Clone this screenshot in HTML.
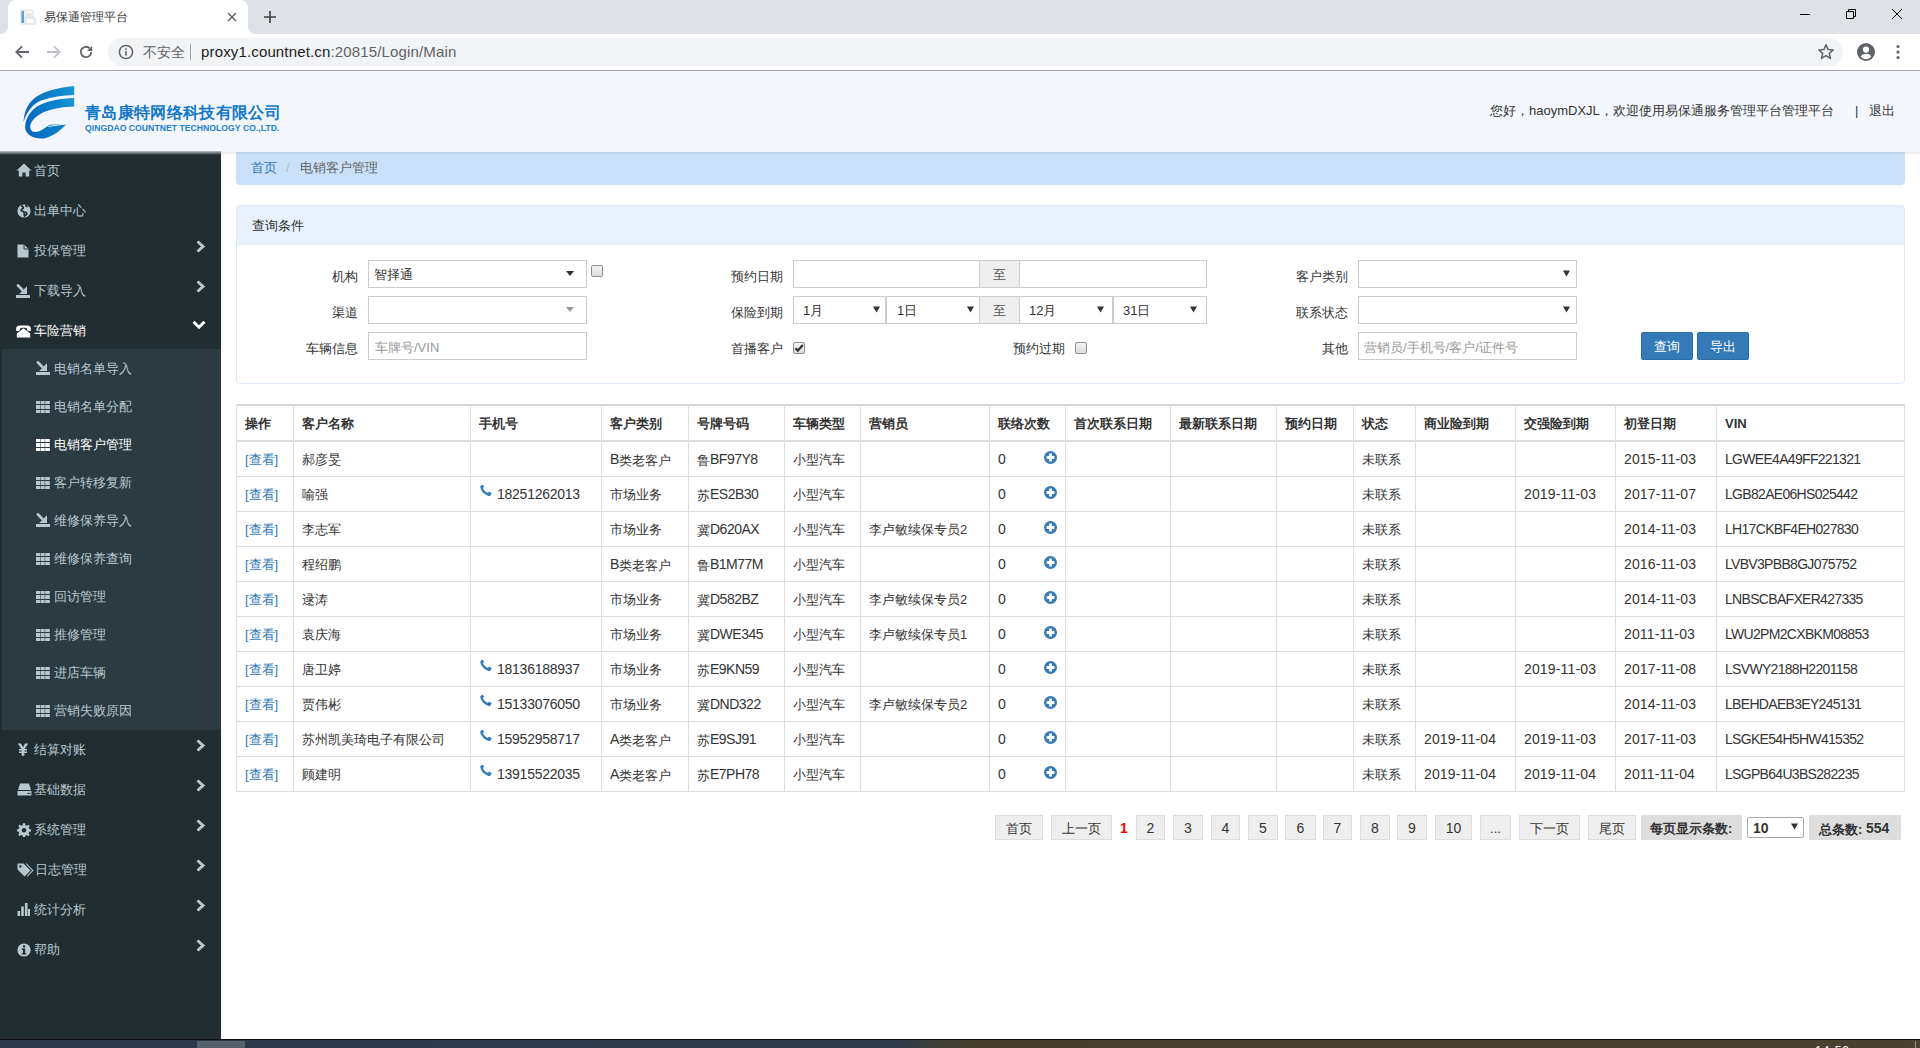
<!DOCTYPE html>
<html><head><meta charset="utf-8">
<style>
*{box-sizing:border-box;margin:0;padding:0}
html,body{width:1920px;height:1048px;overflow:hidden;background:#fff;font-family:"Liberation Sans",sans-serif;font-size:13px;color:#333}
.abs{position:absolute}
.t{position:absolute;line-height:16px;white-space:nowrap}
/* browser chrome */
#tabs{left:0;top:0;width:1920px;height:34px;background:#dee1e6}
#tab{left:8px;top:0;width:240px;height:34px;background:#fff;border-radius:8px 8px 0 0}
#tab:before{content:"";position:absolute;left:-8px;bottom:0;width:8px;height:8px;background:radial-gradient(circle at 0 0,#dee1e6 8px,#fff 8.5px)}
#tab:after{content:"";position:absolute;right:-8px;bottom:0;width:8px;height:8px;background:radial-gradient(circle at 100% 0,#dee1e6 8px,#fff 8.5px)}
#addr{left:0;top:34px;width:1920px;height:37px;background:#fff;border-bottom:1px solid #a4a7ab}
#omni{left:108px;top:38px;width:1735px;height:28px;background:#f1f3f4;border-radius:14px}
/* header */
#hdr{left:0;top:71px;width:1920px;height:81px;background:#f3f7fd}
#side{left:0;top:151px;width:221px;height:888px;background:linear-gradient(#b9bfc6 0px,#222d32 4px)}
#shadow{left:221px;top:152px;width:1699px;height:3px;background:linear-gradient(rgba(0,0,0,.09),rgba(0,0,0,0))}
.mi{position:absolute;left:0;width:221px;height:40px;color:#b8c7ce;font-size:13px}
.mi .ic{position:absolute;left:17px;top:13px;width:14px;height:14px}
.mi .tx{position:absolute;left:34px;top:11px;line-height:18px}
.mi .ar{position:absolute;left:194px;top:12px}
#sub{left:2px;top:349px;width:219px;height:381px;background:#2c3b41}
.si{position:absolute;left:0;width:221px;height:38px;color:#8aa4af;font-size:13px}
.si .ic{position:absolute;left:37px;top:13px;width:12px;height:12px}
.si .tx{position:absolute;left:54px;top:10px;line-height:18px}
#taskbar{left:0;top:1039px;width:1920px;height:9px;background:linear-gradient(90deg,#2c394a 0px,#2e3a4a 900px,#3f3f35 940px,#483f2e 980px,#4a4130 1920px);border-top:1px solid #0c0c0c}
</style></head><body>
<div id="tabs" class="abs"></div>
<div id="tab" class="abs"></div>
<div id="addr" class="abs"></div>
<div id="omni" class="abs"></div>

<!-- tab content -->
<svg class="abs" style="left:20px;top:9px" width="16" height="16" viewBox="0 0 16 16">
<rect x="1" y="1" width="12" height="14" fill="#f4f5f6" stroke="#d8dadd" stroke-width="0.8"/>
<rect x="1.5" y="2" width="2.6" height="12" fill="#5aa0d8"/>
<rect x="6" y="9" width="9" height="6" fill="#fbfbfb" stroke="#cfd2d6" stroke-width="0.8"/>
<path d="M6 5h6M6 7h5" stroke="#c9ccd0" stroke-width="0.8"/>
</svg>
<div class="abs" style="left:44px;top:9px;font-size:12px;line-height:16px;color:#3c4043">易保通管理平台</div>
<svg class="abs" style="left:226px;top:11px" width="12" height="12" viewBox="0 0 12 12"><path d="M2 2L10 10M10 2L2 10" stroke="#5f6368" stroke-width="1.5"/></svg>
<svg class="abs" style="left:263px;top:10px" width="14" height="14" viewBox="0 0 14 14"><path d="M7 1V13M1 7H13" stroke="#3c4043" stroke-width="1.6"/></svg>
<!-- window controls -->
<svg class="abs" style="left:1800px;top:9px" width="10" height="10" viewBox="0 0 10 10"><path d="M0 5.5H10" stroke="#000" stroke-width="1"/></svg>
<svg class="abs" style="left:1846px;top:9px" width="10" height="10" viewBox="0 0 10 10"><path d="M0.5 2.5H7.5V9.5H0.5Z M2.5 2.5V0.5H9.5V7.5H7.5" fill="none" stroke="#000" stroke-width="1"/></svg>
<svg class="abs" style="left:1892px;top:9px" width="10" height="10" viewBox="0 0 10 10"><path d="M0 0L10 10M10 0L0 10" stroke="#000" stroke-width="1"/></svg>
<!-- nav -->
<svg class="abs" style="left:14px;top:44px" width="16" height="16" viewBox="0 0 16 16"><path d="M15 8H2.5M8 2.3L2.3 8L8 13.7" fill="none" stroke="#5f6368" stroke-width="1.8"/></svg>
<svg class="abs" style="left:46px;top:44px" width="16" height="16" viewBox="0 0 16 16"><path d="M1 8H13.5M8 2.3L13.7 8L8 13.7" fill="none" stroke="#bdc1c6" stroke-width="1.8"/></svg>
<svg class="abs" style="left:78px;top:44px" width="16" height="16" viewBox="0 0 16 16"><path d="M13.2 8A5.2 5.2 0 1 1 11.7 4.3" fill="none" stroke="#5f6368" stroke-width="1.8"/><path d="M14.2 1.8V6.9H9.1Z" fill="#5f6368"/></svg>
<!-- omnibox content -->
<svg class="abs" style="left:118px;top:44px" width="16" height="16" viewBox="0 0 16 16"><circle cx="8" cy="8" r="6.6" fill="none" stroke="#5f6368" stroke-width="1.5"/><rect x="7.2" y="7" width="1.6" height="4.6" fill="#5f6368"/><rect x="7.2" y="4.3" width="1.6" height="1.6" fill="#5f6368"/></svg>
<div class="abs" style="left:143px;top:43px;font-size:14px;line-height:18px;color:#5f6368">不安全</div>
<div class="abs" style="left:190px;top:44px;width:1px;height:16px;background:#9aa0a6"></div>
<div class="abs" style="left:201px;top:43px;font-size:15px;letter-spacing:0.15px;line-height:18px;color:#202124;white-space:nowrap">proxy1.countnet.cn<span style="color:#5f6368">:20815/Login/Main</span></div>
<svg class="abs" style="left:1817px;top:43px" width="18" height="18" viewBox="0 0 18 18"><path d="M9 1.8L11.1 6.6L16.2 7L12.3 10.4L13.5 15.4L9 12.7L4.5 15.4L5.7 10.4L1.8 7L6.9 6.6Z" fill="none" stroke="#5f6368" stroke-width="1.5" stroke-linejoin="round"/></svg>
<svg class="abs" style="left:1856px;top:42px" width="20" height="20" viewBox="0 0 20 20"><circle cx="10" cy="10" r="9" fill="#5f6368"/><circle cx="10" cy="7.6" r="3.1" fill="#fff"/><path d="M4.6 14.6C6 12.4 8 11.8 10 11.8S14 12.4 15.4 14.6C14 16.3 12.1 17.2 10 17.2S6 16.3 4.6 14.6Z" fill="#fff"/></svg>
<svg class="abs" style="left:1894px;top:44px" width="8" height="16" viewBox="0 0 8 16"><circle cx="4" cy="2.5" r="1.6" fill="#5f6368"/><circle cx="4" cy="8" r="1.6" fill="#5f6368"/><circle cx="4" cy="13.5" r="1.6" fill="#5f6368"/></svg>
<div id="hdr" class="abs"></div>

<svg class="abs" style="left:23px;top:86px" width="53" height="54" viewBox="0 0 53 54">
<defs><linearGradient id="lg" x1="0" y1="0.2" x2="1" y2="0"><stop offset="0" stop-color="#0a6ac0"/><stop offset="0.6" stop-color="#0b82cc"/><stop offset="1" stop-color="#1898d8"/></linearGradient></defs>
<path d="M51.2,0 V8.9 C40,9.2 28,11 18,14.5 C10,18 4,25 0.5,36 C1,27 4,19 10,13.5 C18,6 34,1.5 51.2,0 Z" fill="url(#lg)"/>
<path d="M51.2,12 V20.4 C42,20.6 30,22 20,26.5 C12,30.5 7,36 7.2,41 C7.4,45 10,46.5 13.5,46 C18,45.2 22,41.5 26.7,38.7 L43.5,38 C38,44 30,50.5 22,52.2 C12,53.5 3,49 2.2,42.4 C1.5,34 7,25 14,20.5 C24,14.5 38,12.5 51.2,12 Z" fill="url(#lg)"/>
<path d="M25.5,40.6 C31,39.4 37,38.6 43.6,38.1" stroke="#f3f7fd" stroke-width="1" fill="none"/>
</svg>
<div id="cname" class="abs" style="left:85px;top:103px;font-size:16px;letter-spacing:0.35px;line-height:20px;font-weight:bold;color:#1378c8;white-space:nowrap">青岛康特网络科技有限公司</div>
<div id="ename" class="abs" style="left:85px;top:123px;font-size:9.5px;line-height:10px;font-weight:bold;color:#1a80cc;white-space:nowrap;transform-origin:0 0;transform:scaleX(0.913)">QINGDAO COUNTNET TECHNOLOGY CO.,LTD.</div>
<div id="welcome" class="abs" style="left:1490px;top:102px;font-size:13px;line-height:18px;color:#333;white-space:nowrap">您好，haoymDXJL，欢迎使用易保通服务管理平台管理平台</div>
<div class="abs" style="left:1855px;top:102px;font-size:13px;line-height:18px;color:#333">|</div>
<div class="abs" style="left:1869px;top:102px;font-size:13px;line-height:18px;color:#333">退出</div>
<div id="side" class="abs"></div>
<div id="sub" class="abs"></div>
<div class="abs" style="left:16px;top:163px;line-height:0"><svg width="16" height="14" viewBox="0 0 16 14"><path d="M8 0.5L15.5 7.5H13.2V13.5H9.6V9.4H6.4V13.5H2.8V7.5H0.5Z" fill="#b8c7ce"/></svg></div>
<div class="abs" style="left:34px;top:163px;font-size:13px;line-height:16px;color:#b8c7ce;white-space:nowrap">首页</div>
<div class="abs" style="left:17px;top:204px;line-height:0"><svg width="14" height="14" viewBox="0 0 14 14"><circle cx="7" cy="7" r="6.6" fill="#b8c7ce"/><path d="M4.2 1.6C5.6 2.2 6.6 3.2 6.2 4.4C5.4 5 3.8 4.8 4.2 6.4C5 7.6 6.6 7.2 7.2 8.4C7.6 9.6 6.8 10.6 7.6 12L9.8 10.2C10.4 8.8 9 8.2 8.2 7.6M8.4 1.2C9 2.2 9.8 2.6 10.8 2.6" fill="none" stroke="#222d32" stroke-width="1.7"/></svg></div>
<div class="abs" style="left:34px;top:203px;font-size:13px;line-height:16px;color:#b8c7ce;white-space:nowrap">出单中心</div>
<div class="abs" style="left:17px;top:244px;line-height:0"><svg width="12" height="14" viewBox="0 0 12 14"><path d="M0.5 0.5H7L11.5 5V13.5H0.5Z" fill="#b8c7ce"/><path d="M7 0.5V5H11.5" fill="none" stroke="#222d32" stroke-width="0.9"/></svg></div>
<div class="abs" style="left:34px;top:243px;font-size:13px;line-height:16px;color:#b8c7ce;white-space:nowrap">投保管理</div>
<svg class="abs" style="left:195px;top:240px" width="11" height="13" viewBox="0 0 11 13"><path d="M2.5 1.5L8 6.5L2.5 11.5" fill="none" stroke="#b8c7ce" stroke-width="3"/></svg>
<div class="abs" style="left:16px;top:284px;line-height:0"><svg width="14" height="14" viewBox="0 0 14 14"><rect x="0" y="11" width="14" height="3" fill="#b8c7ce"/><path d="M3.2 10H11V2.2Z" fill="#b8c7ce"/><path d="M2 1.6L6.2 5.8" stroke="#b8c7ce" stroke-width="2.8" stroke-linecap="round"/></svg></div>
<div class="abs" style="left:34px;top:283px;font-size:13px;line-height:16px;color:#b8c7ce;white-space:nowrap">下载导入</div>
<svg class="abs" style="left:195px;top:280px" width="11" height="13" viewBox="0 0 11 13"><path d="M2.5 1.5L8 6.5L2.5 11.5" fill="none" stroke="#b8c7ce" stroke-width="3"/></svg>
<div class="abs" style="left:16px;top:325px;line-height:0"><svg width="15" height="13" viewBox="0 0 15 13"><path d="M0.2 6V3C0.2 1.5 2 0.5 4 0.5H11C13 0.5 14.8 1.5 14.8 3V6H11.8L10.6 3.3C9.8 2.9 9 2.8 7.5 2.8C6 2.8 5.2 2.9 4.4 3.3L3.2 6Z" fill="#fff"/><path d="M7.5 3.2L0.8 8.6V12.6H14.2V8.6Z" fill="#fff"/></svg></div>
<div class="abs" style="left:34px;top:323px;font-size:13px;line-height:16px;color:#fff;white-space:nowrap">车险营销</div>
<svg class="abs" style="left:192px;top:320px" width="14" height="10" viewBox="0 0 14 10"><path d="M1.5 1.8L7 7.2L12.5 1.8" fill="none" stroke="#fff" stroke-width="3"/></svg>
<div class="abs" style="left:36px;top:361px;line-height:0"><svg width="14" height="14" viewBox="0 0 14 14"><rect x="0" y="11" width="14" height="3" fill="#b8c7ce"/><path d="M3.2 10H11V2.2Z" fill="#b8c7ce"/><path d="M2 1.6L6.2 5.8" stroke="#b8c7ce" stroke-width="2.8" stroke-linecap="round"/></svg></div>
<div class="abs" style="left:54px;top:361px;font-size:13px;line-height:16px;color:#b8c7ce;white-space:nowrap">电销名单导入</div>
<div class="abs" style="left:36px;top:401px;line-height:0"><svg width="14" height="12" viewBox="0 0 14 12"><g fill="#b8c7ce"><rect x="0" y="0" width="4.1" height="3"/><rect x="4.6" y="0" width="4.1" height="3"/><rect x="9.2" y="0" width="4.6" height="3"/><rect x="0" y="4" width="4.1" height="4"/><rect x="4.6" y="4" width="4.1" height="4"/><rect x="9.2" y="4" width="4.6" height="4"/><rect x="0" y="9" width="4.1" height="3"/><rect x="4.6" y="9" width="4.1" height="3"/><rect x="9.2" y="9" width="4.6" height="3"/></g></svg></div>
<div class="abs" style="left:54px;top:399px;font-size:13px;line-height:16px;color:#b8c7ce;white-space:nowrap">电销名单分配</div>
<div class="abs" style="left:36px;top:439px;line-height:0"><svg width="14" height="12" viewBox="0 0 14 12"><g fill="#fff"><rect x="0" y="0" width="4.1" height="3"/><rect x="4.6" y="0" width="4.1" height="3"/><rect x="9.2" y="0" width="4.6" height="3"/><rect x="0" y="4" width="4.1" height="4"/><rect x="4.6" y="4" width="4.1" height="4"/><rect x="9.2" y="4" width="4.6" height="4"/><rect x="0" y="9" width="4.1" height="3"/><rect x="4.6" y="9" width="4.1" height="3"/><rect x="9.2" y="9" width="4.6" height="3"/></g></svg></div>
<div class="abs" style="left:54px;top:437px;font-size:13px;line-height:16px;color:#fff;white-space:nowrap">电销客户管理</div>
<div class="abs" style="left:36px;top:477px;line-height:0"><svg width="14" height="12" viewBox="0 0 14 12"><g fill="#b8c7ce"><rect x="0" y="0" width="4.1" height="3"/><rect x="4.6" y="0" width="4.1" height="3"/><rect x="9.2" y="0" width="4.6" height="3"/><rect x="0" y="4" width="4.1" height="4"/><rect x="4.6" y="4" width="4.1" height="4"/><rect x="9.2" y="4" width="4.6" height="4"/><rect x="0" y="9" width="4.1" height="3"/><rect x="4.6" y="9" width="4.1" height="3"/><rect x="9.2" y="9" width="4.6" height="3"/></g></svg></div>
<div class="abs" style="left:54px;top:475px;font-size:13px;line-height:16px;color:#b8c7ce;white-space:nowrap">客户转移复新</div>
<div class="abs" style="left:36px;top:513px;line-height:0"><svg width="14" height="14" viewBox="0 0 14 14"><rect x="0" y="11" width="14" height="3" fill="#b8c7ce"/><path d="M3.2 10H11V2.2Z" fill="#b8c7ce"/><path d="M2 1.6L6.2 5.8" stroke="#b8c7ce" stroke-width="2.8" stroke-linecap="round"/></svg></div>
<div class="abs" style="left:54px;top:513px;font-size:13px;line-height:16px;color:#b8c7ce;white-space:nowrap">维修保养导入</div>
<div class="abs" style="left:36px;top:553px;line-height:0"><svg width="14" height="12" viewBox="0 0 14 12"><g fill="#b8c7ce"><rect x="0" y="0" width="4.1" height="3"/><rect x="4.6" y="0" width="4.1" height="3"/><rect x="9.2" y="0" width="4.6" height="3"/><rect x="0" y="4" width="4.1" height="4"/><rect x="4.6" y="4" width="4.1" height="4"/><rect x="9.2" y="4" width="4.6" height="4"/><rect x="0" y="9" width="4.1" height="3"/><rect x="4.6" y="9" width="4.1" height="3"/><rect x="9.2" y="9" width="4.6" height="3"/></g></svg></div>
<div class="abs" style="left:54px;top:551px;font-size:13px;line-height:16px;color:#b8c7ce;white-space:nowrap">维修保养查询</div>
<div class="abs" style="left:36px;top:591px;line-height:0"><svg width="14" height="12" viewBox="0 0 14 12"><g fill="#b8c7ce"><rect x="0" y="0" width="4.1" height="3"/><rect x="4.6" y="0" width="4.1" height="3"/><rect x="9.2" y="0" width="4.6" height="3"/><rect x="0" y="4" width="4.1" height="4"/><rect x="4.6" y="4" width="4.1" height="4"/><rect x="9.2" y="4" width="4.6" height="4"/><rect x="0" y="9" width="4.1" height="3"/><rect x="4.6" y="9" width="4.1" height="3"/><rect x="9.2" y="9" width="4.6" height="3"/></g></svg></div>
<div class="abs" style="left:54px;top:589px;font-size:13px;line-height:16px;color:#b8c7ce;white-space:nowrap">回访管理</div>
<div class="abs" style="left:36px;top:629px;line-height:0"><svg width="14" height="12" viewBox="0 0 14 12"><g fill="#b8c7ce"><rect x="0" y="0" width="4.1" height="3"/><rect x="4.6" y="0" width="4.1" height="3"/><rect x="9.2" y="0" width="4.6" height="3"/><rect x="0" y="4" width="4.1" height="4"/><rect x="4.6" y="4" width="4.1" height="4"/><rect x="9.2" y="4" width="4.6" height="4"/><rect x="0" y="9" width="4.1" height="3"/><rect x="4.6" y="9" width="4.1" height="3"/><rect x="9.2" y="9" width="4.6" height="3"/></g></svg></div>
<div class="abs" style="left:54px;top:627px;font-size:13px;line-height:16px;color:#b8c7ce;white-space:nowrap">推修管理</div>
<div class="abs" style="left:36px;top:667px;line-height:0"><svg width="14" height="12" viewBox="0 0 14 12"><g fill="#b8c7ce"><rect x="0" y="0" width="4.1" height="3"/><rect x="4.6" y="0" width="4.1" height="3"/><rect x="9.2" y="0" width="4.6" height="3"/><rect x="0" y="4" width="4.1" height="4"/><rect x="4.6" y="4" width="4.1" height="4"/><rect x="9.2" y="4" width="4.6" height="4"/><rect x="0" y="9" width="4.1" height="3"/><rect x="4.6" y="9" width="4.1" height="3"/><rect x="9.2" y="9" width="4.6" height="3"/></g></svg></div>
<div class="abs" style="left:54px;top:665px;font-size:13px;line-height:16px;color:#b8c7ce;white-space:nowrap">进店车辆</div>
<div class="abs" style="left:36px;top:705px;line-height:0"><svg width="14" height="12" viewBox="0 0 14 12"><g fill="#b8c7ce"><rect x="0" y="0" width="4.1" height="3"/><rect x="4.6" y="0" width="4.1" height="3"/><rect x="9.2" y="0" width="4.6" height="3"/><rect x="0" y="4" width="4.1" height="4"/><rect x="4.6" y="4" width="4.1" height="4"/><rect x="9.2" y="4" width="4.6" height="4"/><rect x="0" y="9" width="4.1" height="3"/><rect x="4.6" y="9" width="4.1" height="3"/><rect x="9.2" y="9" width="4.6" height="3"/></g></svg></div>
<div class="abs" style="left:54px;top:703px;font-size:13px;line-height:16px;color:#b8c7ce;white-space:nowrap">营销失败原因</div>
<div class="abs" style="left:17px;top:743px;line-height:0"><svg width="12" height="13" viewBox="0 0 12 13"><path d="M0.8 0.5H4L6 4.2L8 0.5H11.2L7.6 6H10V7.5H7.4V8.6H10V10.1H7.4V12.8H4.6V10.1H2V8.6H4.6V7.5H2V6H4.4Z" fill="#b8c7ce"/></svg></div>
<div class="abs" style="left:34px;top:742px;font-size:13px;line-height:16px;color:#b8c7ce;white-space:nowrap">结算对账</div>
<svg class="abs" style="left:195px;top:739px" width="11" height="13" viewBox="0 0 11 13"><path d="M2.5 1.5L8 6.5L2.5 11.5" fill="none" stroke="#b8c7ce" stroke-width="3"/></svg>
<div class="abs" style="left:17px;top:783px;line-height:0"><svg width="15" height="13" viewBox="0 0 15 13"><path d="M3 0.5H12L14 7H1Z" fill="#b8c7ce"/><path d="M0.5 8H14.5V12.5H0.5Z" fill="#b8c7ce"/><rect x="10.5" y="9.8" width="1.4" height="1.2" fill="#222d32"/><rect x="12.4" y="9.8" width="1.2" height="1.2" fill="#222d32"/></svg></div>
<div class="abs" style="left:34px;top:782px;font-size:13px;line-height:16px;color:#b8c7ce;white-space:nowrap">基础数据</div>
<svg class="abs" style="left:195px;top:779px" width="11" height="13" viewBox="0 0 11 13"><path d="M2.5 1.5L8 6.5L2.5 11.5" fill="none" stroke="#b8c7ce" stroke-width="3"/></svg>
<div class="abs" style="left:17px;top:823px;line-height:0"><svg width="14" height="14" viewBox="0 0 14 14"><path d="M6 0.3H8L8.4 2.2L9.8 2.8L11.4 1.7L12.8 3.1L11.7 4.7L12.3 6.1L14 6.4V8.4L12.2 8.8L11.6 10.2L12.7 11.8L11.3 13.2L9.7 12.1L8.3 12.7L8 14H6L5.6 12.6L4.2 12L2.6 13.1L1.2 11.7L2.3 10.1L1.7 8.7L0 8.4V6.4L1.8 6L2.4 4.6L1.3 3L2.7 1.6L4.3 2.7L5.7 2.1Z" fill="#b8c7ce"/><circle cx="7" cy="7.2" r="2.2" fill="#222d32"/></svg></div>
<div class="abs" style="left:34px;top:822px;font-size:13px;line-height:16px;color:#b8c7ce;white-space:nowrap">系统管理</div>
<svg class="abs" style="left:195px;top:819px" width="11" height="13" viewBox="0 0 11 13"><path d="M2.5 1.5L8 6.5L2.5 11.5" fill="none" stroke="#b8c7ce" stroke-width="3"/></svg>
<div class="abs" style="left:17px;top:863px;line-height:0"><svg width="17" height="15" viewBox="0 0 17 15"><path d="M0.5 0.5H6.5L13.5 7.5L7.5 13.5L0.5 6.5Z" fill="#b8c7ce"/><circle cx="3.4" cy="3.4" r="1.2" fill="#222d32"/><path d="M8.5 0.5H9.8L16.5 7.5L10.5 13.8L9.8 13.1L15.1 7.5Z" fill="#b8c7ce"/></svg></div>
<div class="abs" style="left:35px;top:862px;font-size:13px;line-height:16px;color:#b8c7ce;white-space:nowrap">日志管理</div>
<svg class="abs" style="left:195px;top:859px" width="11" height="13" viewBox="0 0 11 13"><path d="M2.5 1.5L8 6.5L2.5 11.5" fill="none" stroke="#b8c7ce" stroke-width="3"/></svg>
<div class="abs" style="left:17px;top:903px;line-height:0"><svg width="13" height="13" viewBox="0 0 13 13"><g fill="#b8c7ce"><rect x="0.5" y="8" width="2.6" height="5"/><rect x="4.2" y="3.5" width="2.6" height="9.5"/><rect x="7.9" y="0" width="2.6" height="13"/><rect x="11" y="6" width="2" height="7"/></g></svg></div>
<div class="abs" style="left:34px;top:902px;font-size:13px;line-height:16px;color:#b8c7ce;white-space:nowrap">统计分析</div>
<svg class="abs" style="left:195px;top:899px" width="11" height="13" viewBox="0 0 11 13"><path d="M2.5 1.5L8 6.5L2.5 11.5" fill="none" stroke="#b8c7ce" stroke-width="3"/></svg>
<div class="abs" style="left:17px;top:943px;line-height:0"><svg width="14" height="14" viewBox="0 0 14 14"><circle cx="7" cy="7" r="6.6" fill="#b8c7ce"/><rect x="6" y="2.4" width="2.2" height="2.1" fill="#222d32"/><path d="M4.8 5.6H8.2V10.2H9.2V11.5H4.8V10.2H5.9V6.9H4.8Z" fill="#222d32"/></svg></div>
<div class="abs" style="left:34px;top:942px;font-size:13px;line-height:16px;color:#b8c7ce;white-space:nowrap">帮助</div>
<svg class="abs" style="left:195px;top:939px" width="11" height="13" viewBox="0 0 11 13"><path d="M2.5 1.5L8 6.5L2.5 11.5" fill="none" stroke="#b8c7ce" stroke-width="3"/></svg>





<!--MAIN-->
<div class="abs" style="left:236px;top:152px;width:1669px;height:33px;background:#c8e1f9;border-radius:0 0 4px 4px"></div>
<div class="t" style="left:251px;top:160px;font-size:13px;color:#337ab7">首页</div>
<div class="t" style="left:286px;top:160px;font-size:13px;color:#bbb">/</div>
<div class="t" style="left:300px;top:160px;font-size:13px;color:#666">电销客户管理</div>
<div class="abs" style="left:236px;top:205px;width:1669px;height:179px;background:#fff;border:1px solid #dde9f6;border-radius:4px"></div>
<div class="abs" style="left:237px;top:206px;width:1667px;height:39px;background:#e8f1fb;border-radius:3px 3px 0 0"></div>
<div class="t" style="left:252px;top:218px;font-size:13px;color:#333">查询条件</div>
<div class="t" style="left:158px;width:200px;text-align:right;top:269px;font-size:13px;color:#333">机构</div>
<div class="t" style="left:158px;width:200px;text-align:right;top:305px;font-size:13px;color:#333">渠道</div>
<div class="t" style="left:158px;width:200px;text-align:right;top:341px;font-size:13px;color:#333">车辆信息</div>
<div class="abs" style="left:368px;top:260px;width:219px;height:28px;background:#fff;border:1px solid #ccc;"></div>
<div class="t" style="left:374px;top:267px;font-size:13px;color:#333">智择通</div>
<svg class="abs" style="left:566px;top:271px" width="8" height="5" viewBox="0 0 8 5"><path d="M0 0H8L4.0 5Z" fill="#333"/></svg>
<div class="abs" style="left:591px;top:265px;width:12px;height:12px;border:1px solid #8f8f8f;border-radius:2px;background:linear-gradient(#f4f4f4,#dcdcdc)"></div>
<div class="abs" style="left:368px;top:296px;width:219px;height:28px;background:#fff;border:1px solid #ccc;"></div>
<svg class="abs" style="left:566px;top:307px" width="8" height="5" viewBox="0 0 8 5"><path d="M0 0H8L4.0 5Z" fill="#999"/></svg>
<div class="abs" style="left:368px;top:332px;width:219px;height:28px;background:#fff;border:1px solid #ccc;"></div>
<div class="t" style="left:375px;top:340px;font-size:13px;color:#999">车牌号/VIN</div>
<div class="t" style="left:583px;width:200px;text-align:right;top:269px;font-size:13px;color:#333">预约日期</div>
<div class="t" style="left:583px;width:200px;text-align:right;top:305px;font-size:13px;color:#333">保险到期</div>
<div class="t" style="left:583px;width:200px;text-align:right;top:341px;font-size:13px;color:#333">首播客户</div>
<div class="abs" style="left:793px;top:260px;width:187px;height:28px;background:#fff;border:1px solid #ccc;"></div>
<div class="abs" style="left:979px;top:260px;width:41px;height:28px;background:#eee;border:1px solid #ccc"></div>
<div class="t" style="left:993px;top:267px;font-size:13px;color:#555">至</div>
<div class="abs" style="left:1019px;top:260px;width:188px;height:28px;background:#fff;border:1px solid #ccc;"></div>
<div class="abs" style="left:793px;top:296px;width:93px;height:28px;background:#fff;border:1px solid #ccc;"></div>
<div class="t" style="left:803px;top:303px;font-size:13px;color:#333">1月</div>
<svg class="abs" style="left:873px;top:306px" width="7" height="7" viewBox="0 0 7 7"><path d="M0 0.5H7L3.5 6.5Z" fill="#333"/></svg>
<div class="abs" style="left:886px;top:296px;width:94px;height:28px;background:#fff;border:1px solid #ccc;"></div>
<div class="t" style="left:897px;top:303px;font-size:13px;color:#333">1日</div>
<svg class="abs" style="left:967px;top:306px" width="7" height="7" viewBox="0 0 7 7"><path d="M0 0.5H7L3.5 6.5Z" fill="#333"/></svg>
<div class="abs" style="left:1113px;top:296px;width:94px;height:28px;background:#fff;border:1px solid #ccc;"></div>
<div class="t" style="left:1123px;top:303px;font-size:13px;color:#333">31日</div>
<svg class="abs" style="left:1190px;top:306px" width="7" height="7" viewBox="0 0 7 7"><path d="M0 0.5H7L3.5 6.5Z" fill="#333"/></svg>
<div class="abs" style="left:979px;top:296px;width:41px;height:28px;background:#eee;border:1px solid #ccc"></div>
<div class="t" style="left:993px;top:303px;font-size:13px;color:#555">至</div>
<div class="abs" style="left:1019px;top:296px;width:94px;height:28px;background:#fff;border:1px solid #ccc;"></div>
<div class="t" style="left:1029px;top:303px;font-size:13px;color:#333">12月</div>
<svg class="abs" style="left:1097px;top:306px" width="7" height="7" viewBox="0 0 7 7"><path d="M0 0.5H7L3.5 6.5Z" fill="#333"/></svg>
<div class="abs" style="left:793px;top:342px;width:12px;height:12px;border:1px solid #8f8f8f;border-radius:2px;background:linear-gradient(#f4f4f4,#dcdcdc)"></div><svg class="abs" style="left:794px;top:343px" width="10" height="10" viewBox="0 0 10 10"><path d="M1.4 5.2L3.8 7.6L8.8 2" fill="none" stroke="#333" stroke-width="2.2"/></svg>
<div class="t" style="left:865px;width:200px;text-align:right;top:341px;font-size:13px;color:#333">预约过期</div>
<div class="abs" style="left:1075px;top:342px;width:12px;height:12px;border:1px solid #8f8f8f;border-radius:2px;background:linear-gradient(#f4f4f4,#dcdcdc)"></div>
<div class="t" style="left:1148px;width:200px;text-align:right;top:269px;font-size:13px;color:#333">客户类别</div>
<div class="t" style="left:1148px;width:200px;text-align:right;top:305px;font-size:13px;color:#333">联系状态</div>
<div class="t" style="left:1148px;width:200px;text-align:right;top:341px;font-size:13px;color:#333">其他</div>
<div class="abs" style="left:1358px;top:260px;width:219px;height:28px;background:#fff;border:1px solid #ccc;"></div>
<svg class="abs" style="left:1563px;top:270px" width="7" height="7" viewBox="0 0 7 7"><path d="M0 0.5H7L3.5 6.5Z" fill="#333"/></svg>
<div class="abs" style="left:1358px;top:296px;width:219px;height:28px;background:#fff;border:1px solid #ccc;"></div>
<svg class="abs" style="left:1563px;top:306px" width="7" height="7" viewBox="0 0 7 7"><path d="M0 0.5H7L3.5 6.5Z" fill="#333"/></svg>
<div class="abs" style="left:1358px;top:332px;width:219px;height:28px;background:#fff;border:1px solid #ccc;"></div>
<div class="t" style="left:1364px;top:340px;font-size:13px;color:#999">营销员/手机号/客户/证件号</div>
<div class="abs" style="left:1641px;top:332px;width:52px;height:28px;background:#337ab7;border:1px solid #2e6da4;border-radius:2px"></div>
<div class="t" style="left:1654px;top:339px;font-size:13px;color:#fff">查询</div>
<div class="abs" style="left:1697px;top:332px;width:52px;height:28px;background:#337ab7;border:1px solid #2e6da4;border-radius:2px"></div>
<div class="t" style="left:1710px;top:339px;font-size:13px;color:#fff">导出</div>
<div class="abs" style="left:236px;top:404px;width:1669px;height:2px;background:#d6d6d6"></div>
<div class="abs" style="left:236px;top:440px;width:1669px;height:2px;background:#dcdcdc"></div>
<div class="abs" style="left:236px;top:476px;width:1669px;height:1px;background:#ddd"></div>
<div class="abs" style="left:236px;top:511px;width:1669px;height:1px;background:#ddd"></div>
<div class="abs" style="left:236px;top:546px;width:1669px;height:1px;background:#ddd"></div>
<div class="abs" style="left:236px;top:581px;width:1669px;height:1px;background:#ddd"></div>
<div class="abs" style="left:236px;top:616px;width:1669px;height:1px;background:#ddd"></div>
<div class="abs" style="left:236px;top:651px;width:1669px;height:1px;background:#ddd"></div>
<div class="abs" style="left:236px;top:686px;width:1669px;height:1px;background:#ddd"></div>
<div class="abs" style="left:236px;top:721px;width:1669px;height:1px;background:#ddd"></div>
<div class="abs" style="left:236px;top:756px;width:1669px;height:1px;background:#ddd"></div>
<div class="abs" style="left:236px;top:791px;width:1669px;height:1px;background:#ddd"></div>
<div class="abs" style="left:236px;top:404px;width:1px;height:388px;background:#ddd"></div>
<div class="abs" style="left:293px;top:404px;width:1px;height:388px;background:#ddd"></div>
<div class="abs" style="left:470px;top:404px;width:1px;height:388px;background:#ddd"></div>
<div class="abs" style="left:601px;top:404px;width:1px;height:388px;background:#ddd"></div>
<div class="abs" style="left:688px;top:404px;width:1px;height:388px;background:#ddd"></div>
<div class="abs" style="left:784px;top:404px;width:1px;height:388px;background:#ddd"></div>
<div class="abs" style="left:860px;top:404px;width:1px;height:388px;background:#ddd"></div>
<div class="abs" style="left:989px;top:404px;width:1px;height:388px;background:#ddd"></div>
<div class="abs" style="left:1065px;top:404px;width:1px;height:388px;background:#ddd"></div>
<div class="abs" style="left:1170px;top:404px;width:1px;height:388px;background:#ddd"></div>
<div class="abs" style="left:1276px;top:404px;width:1px;height:388px;background:#ddd"></div>
<div class="abs" style="left:1353px;top:404px;width:1px;height:388px;background:#ddd"></div>
<div class="abs" style="left:1415px;top:404px;width:1px;height:388px;background:#ddd"></div>
<div class="abs" style="left:1515px;top:404px;width:1px;height:388px;background:#ddd"></div>
<div class="abs" style="left:1615px;top:404px;width:1px;height:388px;background:#ddd"></div>
<div class="abs" style="left:1716px;top:404px;width:1px;height:388px;background:#ddd"></div>
<div class="abs" style="left:1904px;top:404px;width:1px;height:388px;background:#ddd"></div>
<div class="t" style="left:245px;top:416px;font-size:13px;color:#333;font-weight:bold">操作</div>
<div class="t" style="left:302px;top:416px;font-size:13px;color:#333;font-weight:bold">客户名称</div>
<div class="t" style="left:479px;top:416px;font-size:13px;color:#333;font-weight:bold">手机号</div>
<div class="t" style="left:610px;top:416px;font-size:13px;color:#333;font-weight:bold">客户类别</div>
<div class="t" style="left:697px;top:416px;font-size:13px;color:#333;font-weight:bold">号牌号码</div>
<div class="t" style="left:793px;top:416px;font-size:13px;color:#333;font-weight:bold">车辆类型</div>
<div class="t" style="left:869px;top:416px;font-size:13px;color:#333;font-weight:bold">营销员</div>
<div class="t" style="left:998px;top:416px;font-size:13px;color:#333;font-weight:bold">联络次数</div>
<div class="t" style="left:1074px;top:416px;font-size:13px;color:#333;font-weight:bold">首次联系日期</div>
<div class="t" style="left:1179px;top:416px;font-size:13px;color:#333;font-weight:bold">最新联系日期</div>
<div class="t" style="left:1285px;top:416px;font-size:13px;color:#333;font-weight:bold">预约日期</div>
<div class="t" style="left:1362px;top:416px;font-size:13px;color:#333;font-weight:bold">状态</div>
<div class="t" style="left:1424px;top:416px;font-size:13px;color:#333;font-weight:bold">商业险到期</div>
<div class="t" style="left:1524px;top:416px;font-size:13px;color:#333;font-weight:bold">交强险到期</div>
<div class="t" style="left:1624px;top:416px;font-size:13px;color:#333;font-weight:bold">初登日期</div>
<div class="t" style="left:1725px;top:416px;font-size:13px;color:#333;font-weight:bold">VIN</div>
<div class="t" style="left:245px;top:452px;font-size:13px;color:#337ab7">[查看]</div>
<div class="t" style="left:302px;top:452px;font-size:13px;color:#333">郝彦旻</div>
<div class="t" style="left:610px;top:452px;font-size:13px;color:#333"><span style="font-size:14px;letter-spacing:-0.5px;position:relative;top:-1px">B</span>类老客户</div>
<div class="t" style="left:697px;top:452px;font-size:13px;color:#333">鲁<span style="font-size:14px;letter-spacing:-0.5px;position:relative;top:-1px">BF97Y8</span></div>
<div class="t" style="left:793px;top:452px;font-size:13px;color:#333">小型汽车</div>
<div class="t" style="left:998px;top:452px;font-size:13px;color:#333"><span style="font-size:14px;letter-spacing:-0.5px;position:relative;top:-1px">0</span></div>
<div class="t" style="left:1362px;top:452px;font-size:13px;color:#333">未联系</div>
<div class="t" style="left:1624px;top:452px;font-size:13px;color:#333"><span style="font-size:14px;letter-spacing:0.15px;position:relative;top:-1px">2015-11-03</span></div>
<div class="t" style="left:1725px;top:452px;font-size:13px;color:#333"><span style="font-size:14px;letter-spacing:-0.69px;position:relative;top:-1px">LGWEE4A49FF221321</span></div>
<svg class="abs" style="left:1044px;top:451px" width="13" height="13" viewBox="0 0 13 13"><circle cx="6.5" cy="6.5" r="6.5" fill="#337ab7"/><path d="M6.5 2.6V10.4M2.6 6.5H10.4" stroke="#fff" stroke-width="2.8"/></svg>
<div class="t" style="left:245px;top:487px;font-size:13px;color:#337ab7">[查看]</div>
<div class="t" style="left:302px;top:487px;font-size:13px;color:#333">喻强</div>
<svg class="abs" style="left:479px;top:484px" width="14" height="13" viewBox="0 0 14 13"><path d="M1.2 2.6L3.2 0.6L5.2 2.6L3.8 4C4.8 6.2 6.6 8 8.8 9L10.2 7.6L12.8 9.6L10.8 12.2C6.2 11.6 1.6 7.2 1.2 2.6Z" fill="#337ab7"/></svg>
<div class="t" style="left:497px;top:487px;font-size:13px;color:#333"><span style="font-size:14px;letter-spacing:-0.25px;position:relative;top:-1px">18251262013</span></div>
<div class="t" style="left:610px;top:487px;font-size:13px;color:#333">市场业务</div>
<div class="t" style="left:697px;top:487px;font-size:13px;color:#333">苏<span style="font-size:14px;letter-spacing:-0.5px;position:relative;top:-1px">ES2B30</span></div>
<div class="t" style="left:793px;top:487px;font-size:13px;color:#333">小型汽车</div>
<div class="t" style="left:998px;top:487px;font-size:13px;color:#333"><span style="font-size:14px;letter-spacing:-0.5px;position:relative;top:-1px">0</span></div>
<div class="t" style="left:1362px;top:487px;font-size:13px;color:#333">未联系</div>
<div class="t" style="left:1524px;top:487px;font-size:13px;color:#333"><span style="font-size:14px;letter-spacing:0.15px;position:relative;top:-1px">2019-11-03</span></div>
<div class="t" style="left:1624px;top:487px;font-size:13px;color:#333"><span style="font-size:14px;letter-spacing:0.15px;position:relative;top:-1px">2017-11-07</span></div>
<div class="t" style="left:1725px;top:487px;font-size:13px;color:#333"><span style="font-size:14px;letter-spacing:-0.69px;position:relative;top:-1px">LGB82AE06HS025442</span></div>
<svg class="abs" style="left:1044px;top:486px" width="13" height="13" viewBox="0 0 13 13"><circle cx="6.5" cy="6.5" r="6.5" fill="#337ab7"/><path d="M6.5 2.6V10.4M2.6 6.5H10.4" stroke="#fff" stroke-width="2.8"/></svg>
<div class="t" style="left:245px;top:522px;font-size:13px;color:#337ab7">[查看]</div>
<div class="t" style="left:302px;top:522px;font-size:13px;color:#333">李志军</div>
<div class="t" style="left:610px;top:522px;font-size:13px;color:#333">市场业务</div>
<div class="t" style="left:697px;top:522px;font-size:13px;color:#333">冀<span style="font-size:14px;letter-spacing:-0.5px;position:relative;top:-1px">D620AX</span></div>
<div class="t" style="left:793px;top:522px;font-size:13px;color:#333">小型汽车</div>
<div class="t" style="left:869px;top:522px;font-size:13px;color:#333">李卢敏续保专员2</div>
<div class="t" style="left:998px;top:522px;font-size:13px;color:#333"><span style="font-size:14px;letter-spacing:-0.5px;position:relative;top:-1px">0</span></div>
<div class="t" style="left:1362px;top:522px;font-size:13px;color:#333">未联系</div>
<div class="t" style="left:1624px;top:522px;font-size:13px;color:#333"><span style="font-size:14px;letter-spacing:0.15px;position:relative;top:-1px">2014-11-03</span></div>
<div class="t" style="left:1725px;top:522px;font-size:13px;color:#333"><span style="font-size:14px;letter-spacing:-0.69px;position:relative;top:-1px">LH17CKBF4EH027830</span></div>
<svg class="abs" style="left:1044px;top:521px" width="13" height="13" viewBox="0 0 13 13"><circle cx="6.5" cy="6.5" r="6.5" fill="#337ab7"/><path d="M6.5 2.6V10.4M2.6 6.5H10.4" stroke="#fff" stroke-width="2.8"/></svg>
<div class="t" style="left:245px;top:557px;font-size:13px;color:#337ab7">[查看]</div>
<div class="t" style="left:302px;top:557px;font-size:13px;color:#333">程绍鹏</div>
<div class="t" style="left:610px;top:557px;font-size:13px;color:#333"><span style="font-size:14px;letter-spacing:-0.5px;position:relative;top:-1px">B</span>类老客户</div>
<div class="t" style="left:697px;top:557px;font-size:13px;color:#333">鲁<span style="font-size:14px;letter-spacing:-0.5px;position:relative;top:-1px">B1M77M</span></div>
<div class="t" style="left:793px;top:557px;font-size:13px;color:#333">小型汽车</div>
<div class="t" style="left:998px;top:557px;font-size:13px;color:#333"><span style="font-size:14px;letter-spacing:-0.5px;position:relative;top:-1px">0</span></div>
<div class="t" style="left:1362px;top:557px;font-size:13px;color:#333">未联系</div>
<div class="t" style="left:1624px;top:557px;font-size:13px;color:#333"><span style="font-size:14px;letter-spacing:0.15px;position:relative;top:-1px">2016-11-03</span></div>
<div class="t" style="left:1725px;top:557px;font-size:13px;color:#333"><span style="font-size:14px;letter-spacing:-0.69px;position:relative;top:-1px">LVBV3PBB8GJ075752</span></div>
<svg class="abs" style="left:1044px;top:556px" width="13" height="13" viewBox="0 0 13 13"><circle cx="6.5" cy="6.5" r="6.5" fill="#337ab7"/><path d="M6.5 2.6V10.4M2.6 6.5H10.4" stroke="#fff" stroke-width="2.8"/></svg>
<div class="t" style="left:245px;top:592px;font-size:13px;color:#337ab7">[查看]</div>
<div class="t" style="left:302px;top:592px;font-size:13px;color:#333">逯涛</div>
<div class="t" style="left:610px;top:592px;font-size:13px;color:#333">市场业务</div>
<div class="t" style="left:697px;top:592px;font-size:13px;color:#333">冀<span style="font-size:14px;letter-spacing:-0.5px;position:relative;top:-1px">D582BZ</span></div>
<div class="t" style="left:793px;top:592px;font-size:13px;color:#333">小型汽车</div>
<div class="t" style="left:869px;top:592px;font-size:13px;color:#333">李卢敏续保专员2</div>
<div class="t" style="left:998px;top:592px;font-size:13px;color:#333"><span style="font-size:14px;letter-spacing:-0.5px;position:relative;top:-1px">0</span></div>
<div class="t" style="left:1362px;top:592px;font-size:13px;color:#333">未联系</div>
<div class="t" style="left:1624px;top:592px;font-size:13px;color:#333"><span style="font-size:14px;letter-spacing:0.15px;position:relative;top:-1px">2014-11-03</span></div>
<div class="t" style="left:1725px;top:592px;font-size:13px;color:#333"><span style="font-size:14px;letter-spacing:-0.69px;position:relative;top:-1px">LNBSCBAFXER427335</span></div>
<svg class="abs" style="left:1044px;top:591px" width="13" height="13" viewBox="0 0 13 13"><circle cx="6.5" cy="6.5" r="6.5" fill="#337ab7"/><path d="M6.5 2.6V10.4M2.6 6.5H10.4" stroke="#fff" stroke-width="2.8"/></svg>
<div class="t" style="left:245px;top:627px;font-size:13px;color:#337ab7">[查看]</div>
<div class="t" style="left:302px;top:627px;font-size:13px;color:#333">袁庆海</div>
<div class="t" style="left:610px;top:627px;font-size:13px;color:#333">市场业务</div>
<div class="t" style="left:697px;top:627px;font-size:13px;color:#333">冀<span style="font-size:14px;letter-spacing:-0.5px;position:relative;top:-1px">DWE345</span></div>
<div class="t" style="left:793px;top:627px;font-size:13px;color:#333">小型汽车</div>
<div class="t" style="left:869px;top:627px;font-size:13px;color:#333">李卢敏续保专员1</div>
<div class="t" style="left:998px;top:627px;font-size:13px;color:#333"><span style="font-size:14px;letter-spacing:-0.5px;position:relative;top:-1px">0</span></div>
<div class="t" style="left:1362px;top:627px;font-size:13px;color:#333">未联系</div>
<div class="t" style="left:1624px;top:627px;font-size:13px;color:#333"><span style="font-size:14px;letter-spacing:0.15px;position:relative;top:-1px">2011-11-03</span></div>
<div class="t" style="left:1725px;top:627px;font-size:13px;color:#333"><span style="font-size:14px;letter-spacing:-0.69px;position:relative;top:-1px">LWU2PM2CXBKM08853</span></div>
<svg class="abs" style="left:1044px;top:626px" width="13" height="13" viewBox="0 0 13 13"><circle cx="6.5" cy="6.5" r="6.5" fill="#337ab7"/><path d="M6.5 2.6V10.4M2.6 6.5H10.4" stroke="#fff" stroke-width="2.8"/></svg>
<div class="t" style="left:245px;top:662px;font-size:13px;color:#337ab7">[查看]</div>
<div class="t" style="left:302px;top:662px;font-size:13px;color:#333">唐卫婷</div>
<svg class="abs" style="left:479px;top:659px" width="14" height="13" viewBox="0 0 14 13"><path d="M1.2 2.6L3.2 0.6L5.2 2.6L3.8 4C4.8 6.2 6.6 8 8.8 9L10.2 7.6L12.8 9.6L10.8 12.2C6.2 11.6 1.6 7.2 1.2 2.6Z" fill="#337ab7"/></svg>
<div class="t" style="left:497px;top:662px;font-size:13px;color:#333"><span style="font-size:14px;letter-spacing:-0.25px;position:relative;top:-1px">18136188937</span></div>
<div class="t" style="left:610px;top:662px;font-size:13px;color:#333">市场业务</div>
<div class="t" style="left:697px;top:662px;font-size:13px;color:#333">苏<span style="font-size:14px;letter-spacing:-0.5px;position:relative;top:-1px">E9KN59</span></div>
<div class="t" style="left:793px;top:662px;font-size:13px;color:#333">小型汽车</div>
<div class="t" style="left:998px;top:662px;font-size:13px;color:#333"><span style="font-size:14px;letter-spacing:-0.5px;position:relative;top:-1px">0</span></div>
<div class="t" style="left:1362px;top:662px;font-size:13px;color:#333">未联系</div>
<div class="t" style="left:1524px;top:662px;font-size:13px;color:#333"><span style="font-size:14px;letter-spacing:0.15px;position:relative;top:-1px">2019-11-03</span></div>
<div class="t" style="left:1624px;top:662px;font-size:13px;color:#333"><span style="font-size:14px;letter-spacing:0.15px;position:relative;top:-1px">2017-11-08</span></div>
<div class="t" style="left:1725px;top:662px;font-size:13px;color:#333"><span style="font-size:14px;letter-spacing:-0.69px;position:relative;top:-1px">LSVWY2188H2201158</span></div>
<svg class="abs" style="left:1044px;top:661px" width="13" height="13" viewBox="0 0 13 13"><circle cx="6.5" cy="6.5" r="6.5" fill="#337ab7"/><path d="M6.5 2.6V10.4M2.6 6.5H10.4" stroke="#fff" stroke-width="2.8"/></svg>
<div class="t" style="left:245px;top:697px;font-size:13px;color:#337ab7">[查看]</div>
<div class="t" style="left:302px;top:697px;font-size:13px;color:#333">贾伟彬</div>
<svg class="abs" style="left:479px;top:694px" width="14" height="13" viewBox="0 0 14 13"><path d="M1.2 2.6L3.2 0.6L5.2 2.6L3.8 4C4.8 6.2 6.6 8 8.8 9L10.2 7.6L12.8 9.6L10.8 12.2C6.2 11.6 1.6 7.2 1.2 2.6Z" fill="#337ab7"/></svg>
<div class="t" style="left:497px;top:697px;font-size:13px;color:#333"><span style="font-size:14px;letter-spacing:-0.25px;position:relative;top:-1px">15133076050</span></div>
<div class="t" style="left:610px;top:697px;font-size:13px;color:#333">市场业务</div>
<div class="t" style="left:697px;top:697px;font-size:13px;color:#333">冀<span style="font-size:14px;letter-spacing:-0.5px;position:relative;top:-1px">DND322</span></div>
<div class="t" style="left:793px;top:697px;font-size:13px;color:#333">小型汽车</div>
<div class="t" style="left:869px;top:697px;font-size:13px;color:#333">李卢敏续保专员2</div>
<div class="t" style="left:998px;top:697px;font-size:13px;color:#333"><span style="font-size:14px;letter-spacing:-0.5px;position:relative;top:-1px">0</span></div>
<div class="t" style="left:1362px;top:697px;font-size:13px;color:#333">未联系</div>
<div class="t" style="left:1624px;top:697px;font-size:13px;color:#333"><span style="font-size:14px;letter-spacing:0.15px;position:relative;top:-1px">2014-11-03</span></div>
<div class="t" style="left:1725px;top:697px;font-size:13px;color:#333"><span style="font-size:14px;letter-spacing:-0.69px;position:relative;top:-1px">LBEHDAEB3EY245131</span></div>
<svg class="abs" style="left:1044px;top:696px" width="13" height="13" viewBox="0 0 13 13"><circle cx="6.5" cy="6.5" r="6.5" fill="#337ab7"/><path d="M6.5 2.6V10.4M2.6 6.5H10.4" stroke="#fff" stroke-width="2.8"/></svg>
<div class="t" style="left:245px;top:732px;font-size:13px;color:#337ab7">[查看]</div>
<div class="t" style="left:302px;top:732px;font-size:13px;color:#333">苏州凯美琦电子有限公司</div>
<svg class="abs" style="left:479px;top:729px" width="14" height="13" viewBox="0 0 14 13"><path d="M1.2 2.6L3.2 0.6L5.2 2.6L3.8 4C4.8 6.2 6.6 8 8.8 9L10.2 7.6L12.8 9.6L10.8 12.2C6.2 11.6 1.6 7.2 1.2 2.6Z" fill="#337ab7"/></svg>
<div class="t" style="left:497px;top:732px;font-size:13px;color:#333"><span style="font-size:14px;letter-spacing:-0.25px;position:relative;top:-1px">15952958717</span></div>
<div class="t" style="left:610px;top:732px;font-size:13px;color:#333"><span style="font-size:14px;letter-spacing:-0.5px;position:relative;top:-1px">A</span>类老客户</div>
<div class="t" style="left:697px;top:732px;font-size:13px;color:#333">苏<span style="font-size:14px;letter-spacing:-0.5px;position:relative;top:-1px">E9SJ91</span></div>
<div class="t" style="left:793px;top:732px;font-size:13px;color:#333">小型汽车</div>
<div class="t" style="left:998px;top:732px;font-size:13px;color:#333"><span style="font-size:14px;letter-spacing:-0.5px;position:relative;top:-1px">0</span></div>
<div class="t" style="left:1362px;top:732px;font-size:13px;color:#333">未联系</div>
<div class="t" style="left:1424px;top:732px;font-size:13px;color:#333"><span style="font-size:14px;letter-spacing:0.15px;position:relative;top:-1px">2019-11-04</span></div>
<div class="t" style="left:1524px;top:732px;font-size:13px;color:#333"><span style="font-size:14px;letter-spacing:0.15px;position:relative;top:-1px">2019-11-03</span></div>
<div class="t" style="left:1624px;top:732px;font-size:13px;color:#333"><span style="font-size:14px;letter-spacing:0.15px;position:relative;top:-1px">2017-11-03</span></div>
<div class="t" style="left:1725px;top:732px;font-size:13px;color:#333"><span style="font-size:14px;letter-spacing:-0.69px;position:relative;top:-1px">LSGKE54H5HW415352</span></div>
<svg class="abs" style="left:1044px;top:731px" width="13" height="13" viewBox="0 0 13 13"><circle cx="6.5" cy="6.5" r="6.5" fill="#337ab7"/><path d="M6.5 2.6V10.4M2.6 6.5H10.4" stroke="#fff" stroke-width="2.8"/></svg>
<div class="t" style="left:245px;top:767px;font-size:13px;color:#337ab7">[查看]</div>
<div class="t" style="left:302px;top:767px;font-size:13px;color:#333">顾建明</div>
<svg class="abs" style="left:479px;top:764px" width="14" height="13" viewBox="0 0 14 13"><path d="M1.2 2.6L3.2 0.6L5.2 2.6L3.8 4C4.8 6.2 6.6 8 8.8 9L10.2 7.6L12.8 9.6L10.8 12.2C6.2 11.6 1.6 7.2 1.2 2.6Z" fill="#337ab7"/></svg>
<div class="t" style="left:497px;top:767px;font-size:13px;color:#333"><span style="font-size:14px;letter-spacing:-0.25px;position:relative;top:-1px">13915522035</span></div>
<div class="t" style="left:610px;top:767px;font-size:13px;color:#333"><span style="font-size:14px;letter-spacing:-0.5px;position:relative;top:-1px">A</span>类老客户</div>
<div class="t" style="left:697px;top:767px;font-size:13px;color:#333">苏<span style="font-size:14px;letter-spacing:-0.5px;position:relative;top:-1px">E7PH78</span></div>
<div class="t" style="left:793px;top:767px;font-size:13px;color:#333">小型汽车</div>
<div class="t" style="left:998px;top:767px;font-size:13px;color:#333"><span style="font-size:14px;letter-spacing:-0.5px;position:relative;top:-1px">0</span></div>
<div class="t" style="left:1362px;top:767px;font-size:13px;color:#333">未联系</div>
<div class="t" style="left:1424px;top:767px;font-size:13px;color:#333"><span style="font-size:14px;letter-spacing:0.15px;position:relative;top:-1px">2019-11-04</span></div>
<div class="t" style="left:1524px;top:767px;font-size:13px;color:#333"><span style="font-size:14px;letter-spacing:0.15px;position:relative;top:-1px">2019-11-04</span></div>
<div class="t" style="left:1624px;top:767px;font-size:13px;color:#333"><span style="font-size:14px;letter-spacing:0.15px;position:relative;top:-1px">2011-11-04</span></div>
<div class="t" style="left:1725px;top:767px;font-size:13px;color:#333"><span style="font-size:14px;letter-spacing:-0.69px;position:relative;top:-1px">LSGPB64U3BS282235</span></div>
<svg class="abs" style="left:1044px;top:766px" width="13" height="13" viewBox="0 0 13 13"><circle cx="6.5" cy="6.5" r="6.5" fill="#337ab7"/><path d="M6.5 2.6V10.4M2.6 6.5H10.4" stroke="#fff" stroke-width="2.8"/></svg>
<div class="abs" style="left:995px;top:815px;width:48px;height:25px;background:#eee;border:1px solid #ddd"></div><div class="t" style="left:995px;width:48px;text-align:center;top:821px;font-size:13px;color:#333">首页</div>
<div class="abs" style="left:1051px;top:815px;width:61px;height:25px;background:#eee;border:1px solid #ddd"></div><div class="t" style="left:1051px;width:61px;text-align:center;top:821px;font-size:13px;color:#333">上一页</div>
<div class="t" style="left:1120px;top:821px;font-size:13px;color:#f00;font-weight:bold"><span style="font-size:14px;letter-spacing:0px;position:relative;top:-1px">1</span></div>
<div class="abs" style="left:1136px;top:815px;width:29px;height:25px;background:#eee;border:1px solid #ddd"></div><div class="t" style="left:1136px;width:29px;text-align:center;top:821px;font-size:13px;color:#333"><span style="font-size:14px;letter-spacing:0px;position:relative;top:-1px">2</span></div>
<div class="abs" style="left:1173px;top:815px;width:30px;height:25px;background:#eee;border:1px solid #ddd"></div><div class="t" style="left:1173px;width:30px;text-align:center;top:821px;font-size:13px;color:#333"><span style="font-size:14px;letter-spacing:0px;position:relative;top:-1px">3</span></div>
<div class="abs" style="left:1211px;top:815px;width:29px;height:25px;background:#eee;border:1px solid #ddd"></div><div class="t" style="left:1211px;width:29px;text-align:center;top:821px;font-size:13px;color:#333"><span style="font-size:14px;letter-spacing:0px;position:relative;top:-1px">4</span></div>
<div class="abs" style="left:1248px;top:815px;width:30px;height:25px;background:#eee;border:1px solid #ddd"></div><div class="t" style="left:1248px;width:30px;text-align:center;top:821px;font-size:13px;color:#333"><span style="font-size:14px;letter-spacing:0px;position:relative;top:-1px">5</span></div>
<div class="abs" style="left:1285px;top:815px;width:31px;height:25px;background:#eee;border:1px solid #ddd"></div><div class="t" style="left:1285px;width:31px;text-align:center;top:821px;font-size:13px;color:#333"><span style="font-size:14px;letter-spacing:0px;position:relative;top:-1px">6</span></div>
<div class="abs" style="left:1323px;top:815px;width:29px;height:25px;background:#eee;border:1px solid #ddd"></div><div class="t" style="left:1323px;width:29px;text-align:center;top:821px;font-size:13px;color:#333"><span style="font-size:14px;letter-spacing:0px;position:relative;top:-1px">7</span></div>
<div class="abs" style="left:1360px;top:815px;width:30px;height:25px;background:#eee;border:1px solid #ddd"></div><div class="t" style="left:1360px;width:30px;text-align:center;top:821px;font-size:13px;color:#333"><span style="font-size:14px;letter-spacing:0px;position:relative;top:-1px">8</span></div>
<div class="abs" style="left:1397px;top:815px;width:30px;height:25px;background:#eee;border:1px solid #ddd"></div><div class="t" style="left:1397px;width:30px;text-align:center;top:821px;font-size:13px;color:#333"><span style="font-size:14px;letter-spacing:0px;position:relative;top:-1px">9</span></div>
<div class="abs" style="left:1435px;top:815px;width:37px;height:25px;background:#eee;border:1px solid #ddd"></div><div class="t" style="left:1435px;width:37px;text-align:center;top:821px;font-size:13px;color:#333"><span style="font-size:14px;letter-spacing:0px;position:relative;top:-1px">10</span></div>
<div class="abs" style="left:1480px;top:815px;width:31px;height:25px;background:#eee;border:1px solid #ddd"></div><div class="t" style="left:1480px;width:31px;text-align:center;top:821px;font-size:13px;color:#333">...</div>
<div class="abs" style="left:1519px;top:815px;width:61px;height:25px;background:#eee;border:1px solid #ddd"></div><div class="t" style="left:1519px;width:61px;text-align:center;top:821px;font-size:13px;color:#333">下一页</div>
<div class="abs" style="left:1588px;top:815px;width:48px;height:25px;background:#eee;border:1px solid #ddd"></div><div class="t" style="left:1588px;width:48px;text-align:center;top:821px;font-size:13px;color:#333">尾页</div>
<div class="abs" style="left:1641px;top:815px;width:101px;height:25px;background:#ddd"></div>
<div class="t" style="left:1650px;top:821px;font-size:13px;color:#333;font-weight:bold">每页显示条数:</div>
<div class="abs" style="left:1747px;top:817px;width:57px;height:21px;background:#fff;border:1px solid #aaa;border-radius:2px"></div>
<div class="t" style="left:1753px;top:821px;font-size:13px;color:#333;font-weight:bold"><span style="font-size:14px;letter-spacing:0px;position:relative;top:-1px">10</span></div>
<svg class="abs" style="left:1791px;top:823px" width="7" height="7" viewBox="0 0 7 7"><path d="M0 0.5H7L3.5 6.5Z" fill="#333"/></svg>
<div class="abs" style="left:1809px;top:815px;width:92px;height:25px;background:#ddd"></div>
<div class="t" style="left:1819px;top:821px;font-size:13px;color:#333;font-weight:bold">总条数: <span style="font-size:14px;letter-spacing:0px;position:relative;top:-1px">554</span></div>
<!--/MAIN-->
<div id="shadow" class="abs"></div>
<div id="taskbar" class="abs"></div>
<div class="abs" style="left:197px;top:1041px;width:48px;height:7px;background:#56606b"></div>
<div class="abs" style="left:1915px;top:1041px;width:1px;height:7px;background:#9a917f"></div>
<div class="abs" style="left:1815px;top:1044px;font-size:12px;line-height:14px;color:#fff;letter-spacing:1px;height:4px;overflow:hidden;white-space:nowrap">14:59</div>
</body></html>
